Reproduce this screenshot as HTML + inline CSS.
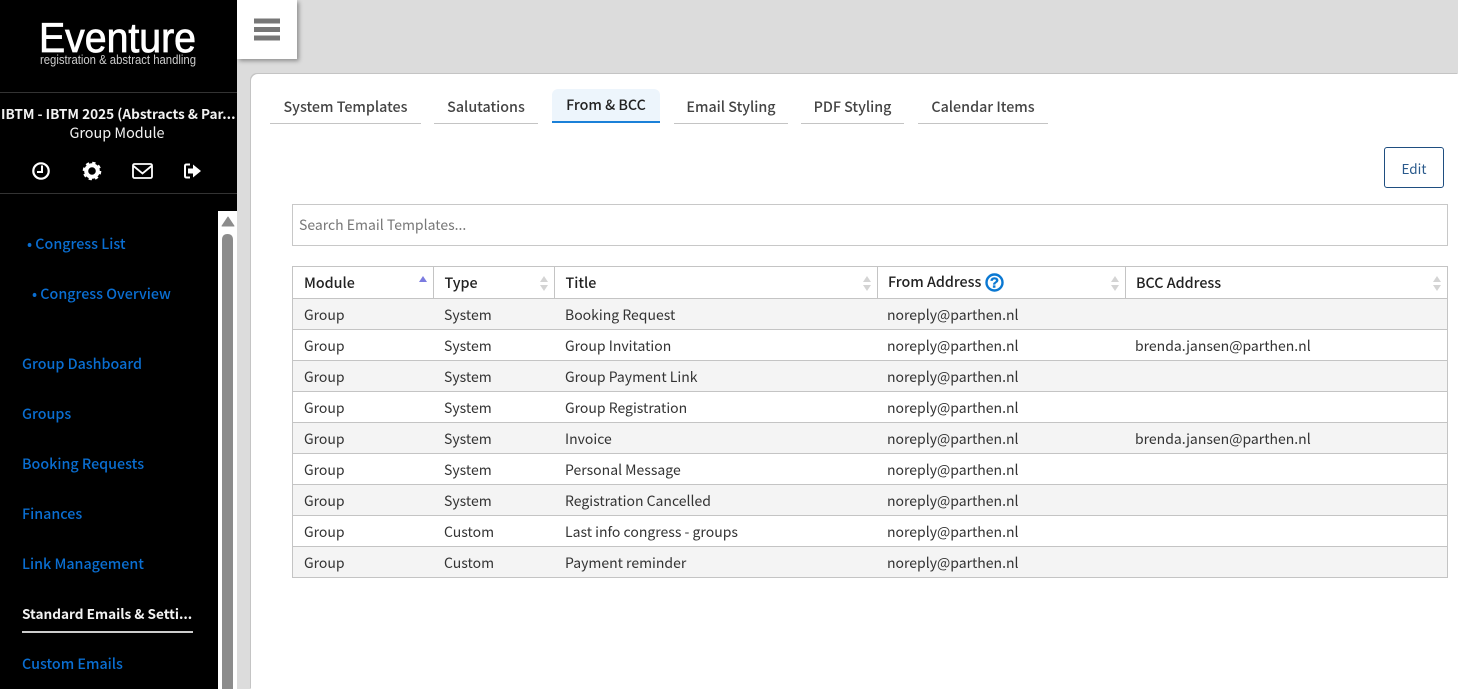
<!DOCTYPE html>
<html><head><meta charset="utf-8"><title>Eventure</title>
<style>
html,body{margin:0;padding:0;width:1458px;height:689px;overflow:hidden;background:#dcdcdc}
body{position:relative;font-family:"Noto Sans CJK JP","Liberation Sans",sans-serif;font-size:14px;color:#333}
.a{position:absolute;white-space:nowrap}
#side{position:absolute;left:0;top:0;width:237px;height:689px;background:#000;overflow:hidden}
.nav{position:absolute;white-space:nowrap;line-height:20px;color:#0a6ed1;font-weight:500;font-size:14.3px}
.hr{position:absolute;left:0;width:237px;height:1px;background:#333}
#main{position:absolute;left:251px;top:74px;width:1207px;height:615px;background:#fff;border-top-left-radius:7px;box-shadow:-1px -1px 0 #c4c4c4}
.tab{position:absolute;top:89px;height:34px;line-height:36px;text-align:center;border-bottom:1px solid #c4c4c4;color:#444;font-weight:500;font-size:14.3px}
table{position:absolute;left:292px;top:266px;width:1156px;border-collapse:collapse;table-layout:fixed}
td,th{border-top:1px solid #c4c4c4;border-bottom:1px solid #c4c4c4;padding:2px 0 0 10.5px;height:28px;line-height:28px;text-align:left;font-weight:400;white-space:nowrap;overflow:hidden}
th{padding-top:0;height:31px;line-height:30px;font-weight:500;color:#222;border-right:1px solid #c4c4c4;position:relative;font-size:14.3px}
td.m{padding-left:11px}
td.f{padding-left:9.5px}
th:first-child,td:first-child{border-left:1px solid #c4c4c4}
th:last-child,td:last-child{border-right:1px solid #c4c4c4}
tr:nth-child(even) td{background:#f4f4f4}
th svg.s{position:absolute;right:5px;top:7px}
</style></head><body>
<div id="side">
<svg class="a" style="left:0;top:0" width="237" height="80"><text x="39" y="52" fill="#fff" stroke="#fff" stroke-width=".8" font-family="Liberation Sans" font-size="42" textLength="157" lengthAdjust="spacingAndGlyphs">Eventure</text><text x="40" y="64" fill="#ccc" font-family="Liberation Sans" font-size="12.5" textLength="156" lengthAdjust="spacingAndGlyphs">registration &amp; abstract handling</text></svg>
<div class="hr" style="top:92px"></div>
<div class="a" style="left:1px;top:103px;width:236px;line-height:20px;color:#f2f2f2;font-weight:700;overflow:hidden;font-size:13.6px">IBTM - IBTM 2025 (Abstracts &amp; Par...</div>
<div class="a" style="left:0;top:123px;width:234px;text-align:center;line-height:20px;color:#f2f2f2;font-size:14.4px">Group Module</div>
<svg class="a" style="left:0;top:155px" width="237" height="32" fill="none">
<circle cx="41" cy="16" r="7.700" stroke="#fff" stroke-width="2.200"/><path d="M42 10.500V17H37" stroke="#fff" stroke-width="2"/>
<circle cx="92" cy="16" r="5.800" stroke="#fff" stroke-width="4"/><circle cx="92" cy="16" r="8" stroke="#fff" stroke-width="2.600" stroke-dasharray="3.200 3.080"/>
<rect x="133" y="9" width="19" height="14" rx="1.500" stroke="#fff" stroke-width="1.800"/><path d="M133.500 11L142.500 18.500L151.500 11" stroke="#fff" stroke-width="1.800"/>
<path d="M190 9.500H186.500Q185 9.500 185 11V21Q185 22.500 186.500 22.500H190" stroke="#fff" stroke-width="2"/><path d="M188 13.500H193V9.500L201 16L193 22.500V18.500H188Z" fill="#fff"/>
</svg>
<div class="hr" style="top:193px"></div>
<div class="a" style="left:218px;top:211px;width:19px;height:478px;background:#fff"></div>
<svg class="a" style="left:218px;top:211px" width="19" height="478"><path d="M4 15L10 6L16 15Z" fill="#8c8c8c" stroke="#8c8c8c" stroke-linejoin="round"/><path d="M4 478V29Q4 23 9.500 23Q15 23 15 29V478Z" fill="#8c8c8c"/></svg>
<div class="nav" style="left:27px;top:234px">• Congress List</div>
<div class="nav" style="left:32px;top:284px">• Congress Overview</div>
<div class="nav" style="left:22px;top:354px">Group Dashboard</div>
<div class="nav" style="left:22px;top:404px">Groups</div>
<div class="nav" style="left:22px;top:454px">Booking Requests</div>
<div class="nav" style="left:22px;top:504px">Finances</div>
<div class="nav" style="left:22px;top:554px">Link Management</div>
<div class="nav" style="left:22px;top:603px;color:#f2f2f2;font-weight:700;font-size:13.6px">Standard Emails &amp; Setti...</div>
<div class="a" style="left:22px;top:631px;width:171px;height:2px;background:#ccc"></div>
<div class="nav" style="left:22px;top:654px">Custom Emails</div>
</div>
<div class="a" style="left:237px;top:0;width:60px;height:59px;background:#fff;box-shadow:2px 2px 4px rgba(0,0,0,.35)">
<svg width="60" height="59"><path d="M17 18.500h26v5H17zM17 27h26v5H17zM17 35.500h26v5H17z" fill="#777"/></svg></div>
<div id="main"></div>
<div class="tab" style="left:270px;width:151px">System Templates</div>
<div class="tab" style="left:434px;width:104px">Salutations</div>
<div class="tab" style="left:552px;width:108px;height:32px;background:#edf5fc;border-bottom:2px solid #1a80d8;color:#222;line-height:32px;border-radius:6px 6px 0 0">From &amp; BCC</div>
<div class="tab" style="left:674px;width:114px">Email Styling</div>
<div class="tab" style="left:801px;width:103px">PDF Styling</div>
<div class="tab" style="left:918px;width:130px">Calendar Items</div>
<div class="a" style="left:1384px;top:147px;width:58px;height:39px;border:1.500px solid #1f4e80;border-radius:3px;line-height:40px;text-align:center;color:#2a5a8c;font-size:13.5px">Edit</div>
<div class="a" style="left:292px;top:204px;width:1154px;height:40px;border:1px solid #c8c8c8;line-height:40px;color:#777"><span style="margin-left:6px">Search Email Templates...</span></div>
<table>
<colgroup><col style="width:141px"><col style="width:121px"><col style="width:323px"><col style="width:248px"><col></colgroup>
<tr>
<th style="padding-left:11px">Module<svg class="s" width="10" height="18"><path d="M1 8L5 2L9 8Z" fill="#7b7be0"/></svg></th>
<th>Type<svg class="s" width="10" height="18"><path d="M1 8L5 2L9 8ZM1 11L5 17L9 11Z" fill="#d4d4d4"/></svg></th>
<th>Title<svg class="s" width="10" height="18"><path d="M1 8L5 2L9 8ZM1 11L5 17L9 11Z" fill="#d4d4d4"/></svg></th>
<th style="padding-left:10px"><span style="position:relative;top:-1px">From Address</span><svg style="position:absolute;left:107px;top:6px" width="19" height="19"><circle cx="9.500" cy="9.500" r="8" fill="#fff" stroke="#0a78d2" stroke-width="2.400"/><text x="9.500" y="14.500" text-anchor="middle" font-family="Liberation Sans" font-weight="700" font-size="15" fill="#0a78d2" stroke="#0a78d2" stroke-width=".4">?</text></svg><svg class="s" width="10" height="18"><path d="M1 8L5 2L9 8ZM1 11L5 17L9 11Z" fill="#d4d4d4"/></svg></th>
<th style="padding-left:10px">BCC Address<svg class="s" width="10" height="18"><path d="M1 8L5 2L9 8ZM1 11L5 17L9 11Z" fill="#d4d4d4"/></svg></th>
</tr>
<tr><td class="m">Group</td><td>System</td><td>Booking Request</td><td class="f">noreply@parthen.nl</td><td class="f"></td></tr>
<tr><td class="m">Group</td><td>System</td><td>Group Invitation</td><td class="f">noreply@parthen.nl</td><td class="f">brenda.jansen@parthen.nl</td></tr>
<tr><td class="m">Group</td><td>System</td><td>Group Payment Link</td><td class="f">noreply@parthen.nl</td><td class="f"></td></tr>
<tr><td class="m">Group</td><td>System</td><td>Group Registration</td><td class="f">noreply@parthen.nl</td><td class="f"></td></tr>
<tr><td class="m">Group</td><td>System</td><td>Invoice</td><td class="f">noreply@parthen.nl</td><td class="f">brenda.jansen@parthen.nl</td></tr>
<tr><td class="m">Group</td><td>System</td><td>Personal Message</td><td class="f">noreply@parthen.nl</td><td class="f"></td></tr>
<tr><td class="m">Group</td><td>System</td><td>Registration Cancelled</td><td class="f">noreply@parthen.nl</td><td class="f"></td></tr>
<tr><td class="m">Group</td><td>Custom</td><td>Last info congress - groups</td><td class="f">noreply@parthen.nl</td><td class="f"></td></tr>
<tr><td class="m">Group</td><td>Custom</td><td>Payment reminder</td><td class="f">noreply@parthen.nl</td><td class="f"></td></tr>
</table>
</body></html>
